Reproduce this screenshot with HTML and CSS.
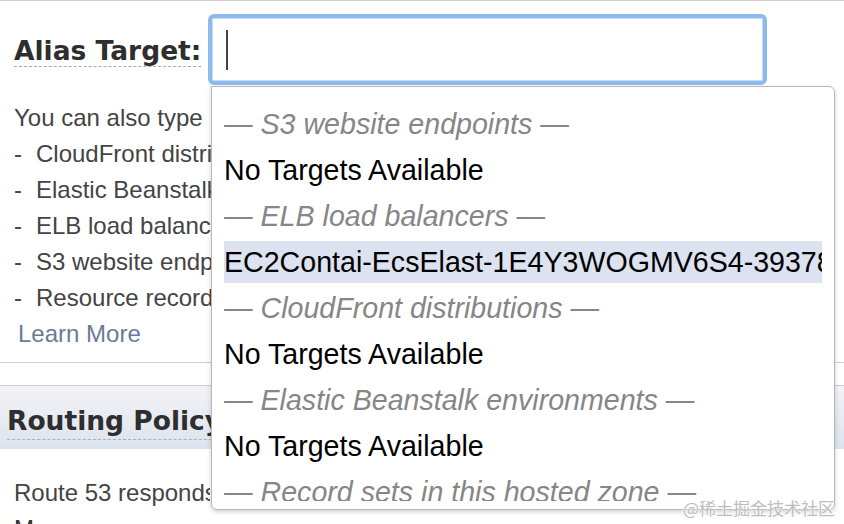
FILE: index.html
```html
<!DOCTYPE html>
<html lang="en">
<head>
<meta charset="utf-8">
<title>Alias Target</title>
<link rel="stylesheet" href="styles.css">
</head>
<body>
<div class="page">
  <section class="alias">
    <div class="field">
      <div class="label-cell"><label class="label">Alias Target:</label></div>
      <div class="combo">
        <div class="input"><span class="caret"></span></div>
        <div class="dropdown">
          <div class="list">
            <div class="opt group">— S3 website endpoints —</div>
            <div class="opt">No Targets Available</div>
            <div class="opt group">— ELB load balancers —</div>
            <div class="opt active">EC2Contai-EcsElast-1E4Y3WOGMV6S4-393786015.us-east-1.elb.amazonaws.com</div>
            <div class="opt group">— CloudFront distributions —</div>
            <div class="opt">No Targets Available</div>
            <div class="opt group">— Elastic Beanstalk environments —</div>
            <div class="opt">No Targets Available</div>
            <div class="opt group">— Record sets in this hosted zone —</div>
          </div>
        </div>
      </div>
    </div>
    <div class="help">
      <p class="line">You can also type&nbsp; the domain name for the resource. Examples:</p>
      <ul class="examples">
        <li class="line"><span class="dash">-</span>CloudFront distribution domain name: d111111abcdef8.cloudfront.net</li>
        <li class="line"><span class="dash">-</span>Elastic Beanstalk environment CNAME: example.elasticbeanstalk.com</li>
        <li class="line"><span class="dash">-</span>ELB load balancer DNS name: example-1.us-east-1.elb.amazonaws.com</li>
        <li class="line"><span class="dash">-</span>S3 website endpoint: s3-website.us-east-1.amazonaws.com</li>
        <li class="line"><span class="dash">-</span>Resource record set in this hosted zone: www.example.com</li>
      </ul>
      <a class="learn line" href="#">Learn More</a>
    </div>
  </section>
  <section class="routing">
    <div class="band"><h2 class="band-title">Routing Policy</h2></div>
    <div class="routing-body">
      <p class="line">Route 53 responds to queries based only on the values in this record.</p>
      <p class="line more">More</p>
    </div>
  </section>
  <div class="watermark">@稀土掘金技术社区</div>
</div>
</body>
</html>
```

FILE: styles.css
```css
html, body {
  margin: 0;
  padding: 0;
  background: #fff;
}

.page {
  position: relative;
  width: 844px;
  height: 524px;
  overflow: hidden;
  border-top: 1px solid #cfcfcf;
  box-sizing: border-box;
  font-family: "Liberation Sans", Arial, sans-serif;
  color: #444;
}

.alias {
  border-bottom: 1px solid #cdcdcd;
  padding-bottom: 10px;
}

.field {
  display: grid;
  grid-template-columns: 194px 559px;
  padding: 13px 0 0 14px;
}

.label-cell {
  padding-top: 22px;
}

.label {
  display: inline-block;
  font-family: "DejaVu Sans", Verdana, sans-serif;
  font-weight: bold;
  font-size: 26.5px;
  line-height: 30px;
  color: #2e2e2e;
  border-bottom: 1px dashed #aaa;
}

.combo {
  position: relative;
}

.input {
  width: 559px;
  height: 71px;
  box-sizing: border-box;
  border: 4px solid #8dbaee;
  border-radius: 6px;
  background: #fff;
  box-shadow: inset 0 0 0 1px #c6dbf5;
  padding: 12px 0 0 14px;
}

.caret {
  display: block;
  width: 2px;
  height: 40px;
  background: #444;
}

.dropdown {
  position: absolute;
  top: 72px;
  left: 3px;
  width: 624px;
  height: 424px;
  box-sizing: border-box;
  border: 1px solid #b8b8b8;
  border-radius: 0 6px 6px 6px;
  background: #fff;
  box-shadow: 0 2px 5px rgba(0, 0, 0, 0.18);
  padding: 16px 12px 0 12px;
  z-index: 2;
}

.list {
  height: 398px;
  overflow: hidden;
}

.opt {
  height: 42px;
  line-height: 42px;
  margin-bottom: 4px;
  font-size: 28.6px;
  color: #000;
  white-space: nowrap;
  overflow: hidden;
}

.opt.group {
  font-style: italic;
  color: #868686;
}

.opt.active {
  background: #dce2ef;
}

.help {
  margin-top: 15px;
  width: 197px;
  padding-left: 14px;
  font-size: 24px;
  white-space: nowrap;
  overflow: hidden;
}

.line {
  display: block;
  margin: 0;
  height: 36px;
  line-height: 36px;
}

.examples {
  list-style: none;
  margin: 0;
  padding: 0;
}

.dash {
  display: inline-block;
  width: 22px;
}

.learn {
  padding-left: 4px;
  color: #6a7b97;
  text-decoration: none;
}

.routing {
  margin-top: 22px;
  border-top: 1px solid #cdcdcd;
}

.band {
  background: linear-gradient(#f2f3f6, #dde3ed);
  padding: 20px 0 9px 7px;
}

.band-title {
  display: inline-block;
  margin: 0;
  font-family: "DejaVu Sans", Verdana, sans-serif;
  font-weight: bold;
  font-size: 26.5px;
  line-height: 30px;
  color: #2e2e2e;
  padding-bottom: 3px;
  border-bottom: 1px dashed #a9b0bb;
  white-space: nowrap;
}

.routing-body {
  width: 196px;
  padding: 26px 0 0 14px;
  font-size: 24px;
  white-space: nowrap;
  overflow: hidden;
}

.more {
  color: #333;
}

.watermark {
  position: absolute;
  right: 9px;
  bottom: 6px;
  z-index: 3;
  font-family: "Noto Sans CJK SC", sans-serif;
  font-size: 17px;
  line-height: 20px;
  color: #bdbdbd;
  text-shadow: 0 0 2px #fff, 0 0 2px #fff;
}
```
